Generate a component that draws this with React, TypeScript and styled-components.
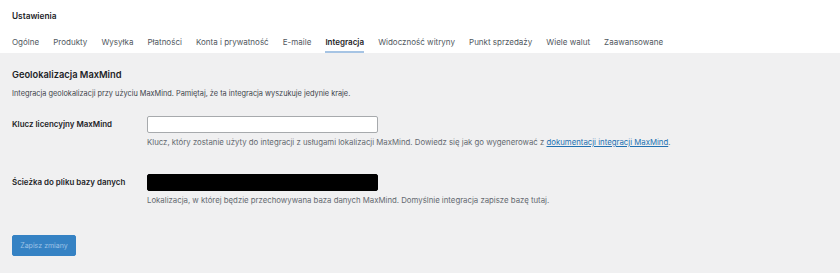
import styled, { createGlobalStyle } from "styled-components";

const GlobalStyle = createGlobalStyle`
  body {
    margin: 0;
    background: #f0f0f1;
    font-family: Inter, "Liberation Sans", sans-serif;
    color: #1d2327;
  }
`;

const tabs = [
  "Ogólne",
  "Produkty",
  "Wysyłka",
  "Płatności",
  "Konta i prywatność",
  "E-maile",
  "Integracja",
  "Widoczność witryny",
  "Punkt sprzedaży",
  "Wiele walut",
  "Zaawansowane",
];

function App() {
  return (
    <>
      <GlobalStyle />
      <Header>
        <PageTitle>Ustawienia</PageTitle>
        <TabBar>
          {tabs.map((tab) => (
            <Tab key={tab} $active={tab === "Integracja"}>
              {tab}
            </Tab>
          ))}
        </TabBar>
      </Header>
      <Content>
        <SectionTitle>Geolokalizacja MaxMind</SectionTitle>
        <Intro>
          Integracja geolokalizacji przy użyciu MaxMind. Pamiętaj, że ta integracja wyszukuje jedynie kraje.
        </Intro>
        <FormTable>
          <FieldRow>
            <Label>Klucz licencyjny MaxMind</Label>
            <Field>
              <TextInput type="text" />
              <Help>
                Klucz, który zostanie użyty do integracji z usługami lokalizacji MaxMind. Dowiedz się jak go
                wygenerować z <HelpLink href="#">dokumentacji integracji MaxMind</HelpLink>.
              </Help>
            </Field>
          </FieldRow>
          <FieldRow>
            <Label>Ścieżka do pliku bazy danych</Label>
            <Field>
              <TextInput type="text" $masked readOnly />
              <Help>
                Lokalizacja, w której będzie przechowywana baza danych MaxMind. Domyślnie integracja zapisze bazę
                tutaj.
              </Help>
            </Field>
          </FieldRow>
        </FormTable>
        <SaveButton disabled>Zapisz zmiany</SaveButton>
      </Content>
    </>
  );
}

const Header = styled.div`
  background: #fff;
  padding: 10px 12px 0;
`;

const PageTitle = styled.h1`
  margin: 0;
  font-size: 8.3px;
  line-height: 12px;
  font-weight: 600;
  color: #1d2327;
`;

const TabBar = styled.nav`
  display: flex;
  gap: 14.1px;
  margin-top: 15px;
`;

const Tab = styled.a<{ $active?: boolean }>`
  font-size: 8px;
  line-height: 11px;
  padding-bottom: 3px;
  border-bottom: 2px solid ${(p) => (p.$active ? "#a6c4e4" : "transparent")};
  color: ${(p) => (p.$active ? "#1d2327" : "#50575e")};
  font-weight: ${(p) => (p.$active ? 600 : 400)};
  white-space: nowrap;
`;

const Content = styled.div`
  padding: 15px 12px 0;
`;

const SectionTitle = styled.h2`
  margin: 0;
  font-size: 9.3px;
  line-height: 13px;
  font-weight: 600;
  color: #1d2327;
`;

const Intro = styled.p`
  margin: 8px 0 0;
  font-size: 7.35px;
  line-height: 10px;
  color: #3c434a;
`;

const FormTable = styled.div`
  display: flex;
  flex-direction: column;
  gap: 27px;
  margin-top: 17px;
`;

const FieldRow = styled.div`
  display: grid;
  grid-template-columns: 135px 1fr;
`;

const Label = styled.label`
  padding-top: 3px;
  font-size: 7.95px;
  line-height: 10px;
  font-weight: 600;
  color: #1d2327;
`;

const Field = styled.div`
  display: flex;
  flex-direction: column;
  gap: 4px;
`;

const TextInput = styled.input<{ $masked?: boolean }>`
  box-sizing: border-box;
  width: 231px;
  height: 17px;
  margin: 0;
  border: 1px solid ${(p) => (p.$masked ? "#000" : "#a7aaad")};
  border-radius: 2px;
  background: ${(p) => (p.$masked ? "#000" : "#fff")};
`;

const Help = styled.p`
  margin: 0;
  font-size: 7.8px;
  line-height: 10px;
  color: #646970;
`;

const HelpLink = styled.a`
  color: #2271b1;
  text-decoration: underline;
`;

const SaveButton = styled.button`
  display: block;
  margin-top: 30px;
  width: 64px;
  height: 21px;
  padding: 0;
  border: 1px solid #3582c4;
  border-radius: 2px;
  background: #3582c4;
  color: #9ec2e6;
  font-family: inherit;
  font-size: 7px;
`;

export default App;
